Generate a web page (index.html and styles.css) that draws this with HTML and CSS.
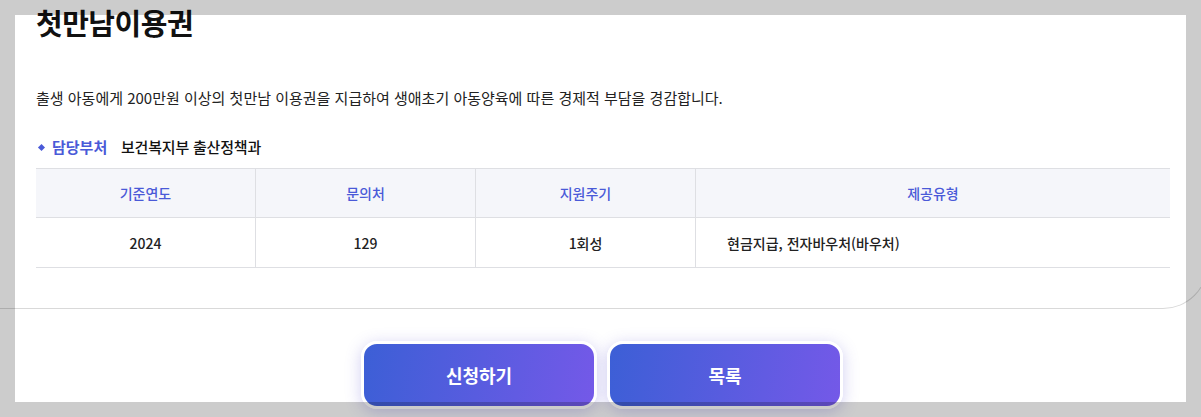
FILE: index.html
```html
<!DOCTYPE html>
<html lang="ko">
<head>
<meta charset="utf-8">
<link rel="stylesheet" href="styles.css">
</head>
<body>
<div class="page">
  <section class="detail">
    <h1 class="title">첫만남이용권</h1>
    <p class="desc">출생 아동에게 200만원 이상의 첫만남 이용권을 지급하여 생애초기 아동양육에 따른 경제적 부담을 경감합니다.</p>
    <div class="dept"><span class="dept-label">담당부처</span><span class="dept-name">보건복지부 출산정책과</span></div>
    <div class="table">
      <div class="th">기준연도</div>
      <div class="th">문의처</div>
      <div class="th">지원주기</div>
      <div class="th">제공유형</div>
      <div class="td">2024</div>
      <div class="td">129</div>
      <div class="td">1회성</div>
      <div class="td left">현금지급, 전자바우처(바우처)</div>
    </div>
  </section>
  <div class="actions">
    <button class="btn">신청하기</button>
    <button class="btn">목록</button>
  </div>
  <div class="curve"></div>
  <div class="dim"></div>
</div>
</body>
</html>
```
FILE: styles.css
```css
* { box-sizing: border-box; }
html, body { margin: 0; padding: 0; background: #fff; }
body {
  font-family: "Noto Sans CJK KR", "Noto Sans", sans-serif;
  color: #222;
  width: 1201px;
  height: 417px;
  overflow: hidden;
}
.page { position: relative; width: 1201px; height: 417px; }
.detail { padding: 0 31px 0 36px; }
.title {
  margin: 0;
  padding-top: 2px;
  font-size: 29px;
  font-weight: 700;
  line-height: 40px;
  color: #111;
  letter-spacing: -0.5px;
}
.desc {
  margin: 44px 0 0;
  font-size: 15px;
  line-height: 24px;
  color: #222;
  letter-spacing: 0;
}
.dept {
  margin-top: 25px;
  display: flex;
  align-items: center;
  font-size: 15px;
  line-height: 24px;
  font-weight: 500;
}
.dept-label {
  position: relative;
  padding-left: 16px;
  color: #4a5ad8;
  width: 85px;
  font-weight: 600;
}
.dept-label::before {
  content: "";
  position: absolute;
  left: 3px;
  top: 10px;
  width: 5px;
  height: 5px;
  background: #4a5ad8;
  transform: rotate(45deg);
}
.dept-name { color: #111; letter-spacing: -0.2px; }
.table {
  margin-top: 9px;
  display: grid;
  grid-template-columns: 219px 220px 220px 1fr;
  border-top: 1px solid #dedfe3;
}
.th, .td {
  display: flex;
  align-items: center;
  justify-content: center;
  font-size: 14px;
  border-bottom: 1px solid #dedfe3;
  border-left: 1px solid #dedfe3;
}
.th:nth-child(4n+1), .td:nth-child(4n+1) { border-left: none; }
.th {
  height: 49px;
  background: #f5f6fa;
  color: #4a5ad8;
  font-weight: 500;
}
.td {
  height: 50px;
  color: #222;
  font-weight: 500;
}
.td.left { justify-content: flex-start; padding-left: 31px; }
.actions {
  margin-top: 73px;
  display: flex;
  justify-content: center;
  gap: 10px;
  padding-left: 3px;
}
.btn {
  width: 236px;
  height: 68px;
  border: 3px solid #fff;
  border-radius: 16px;
  background: linear-gradient(100deg, #3c5fd6 0%, #7459e8 100%);
  color: #fff;
  font-family: "Noto Sans CJK KR", "Noto Sans", sans-serif;
  font-size: 18px;
  font-weight: 700;
  box-shadow: 0 3px 16px rgba(90, 80, 210, 0.28);
  cursor: pointer;
}
.curve {
  position: absolute;
  left: -60px;
  top: 150px;
  width: 1268px;
  height: 159px;
  border-bottom: 1px solid #d9d9d9;
  border-right: 1px solid #d9d9d9;
  border-bottom-right-radius: 45px;
  pointer-events: none;
}
.dim {
  position: absolute;
  left: 15px;
  top: 15px;
  width: 1171px;
  height: 387px;
  box-shadow: 0 0 0 2000px rgba(0, 0, 0, 0.2);
  pointer-events: none;
}
```
